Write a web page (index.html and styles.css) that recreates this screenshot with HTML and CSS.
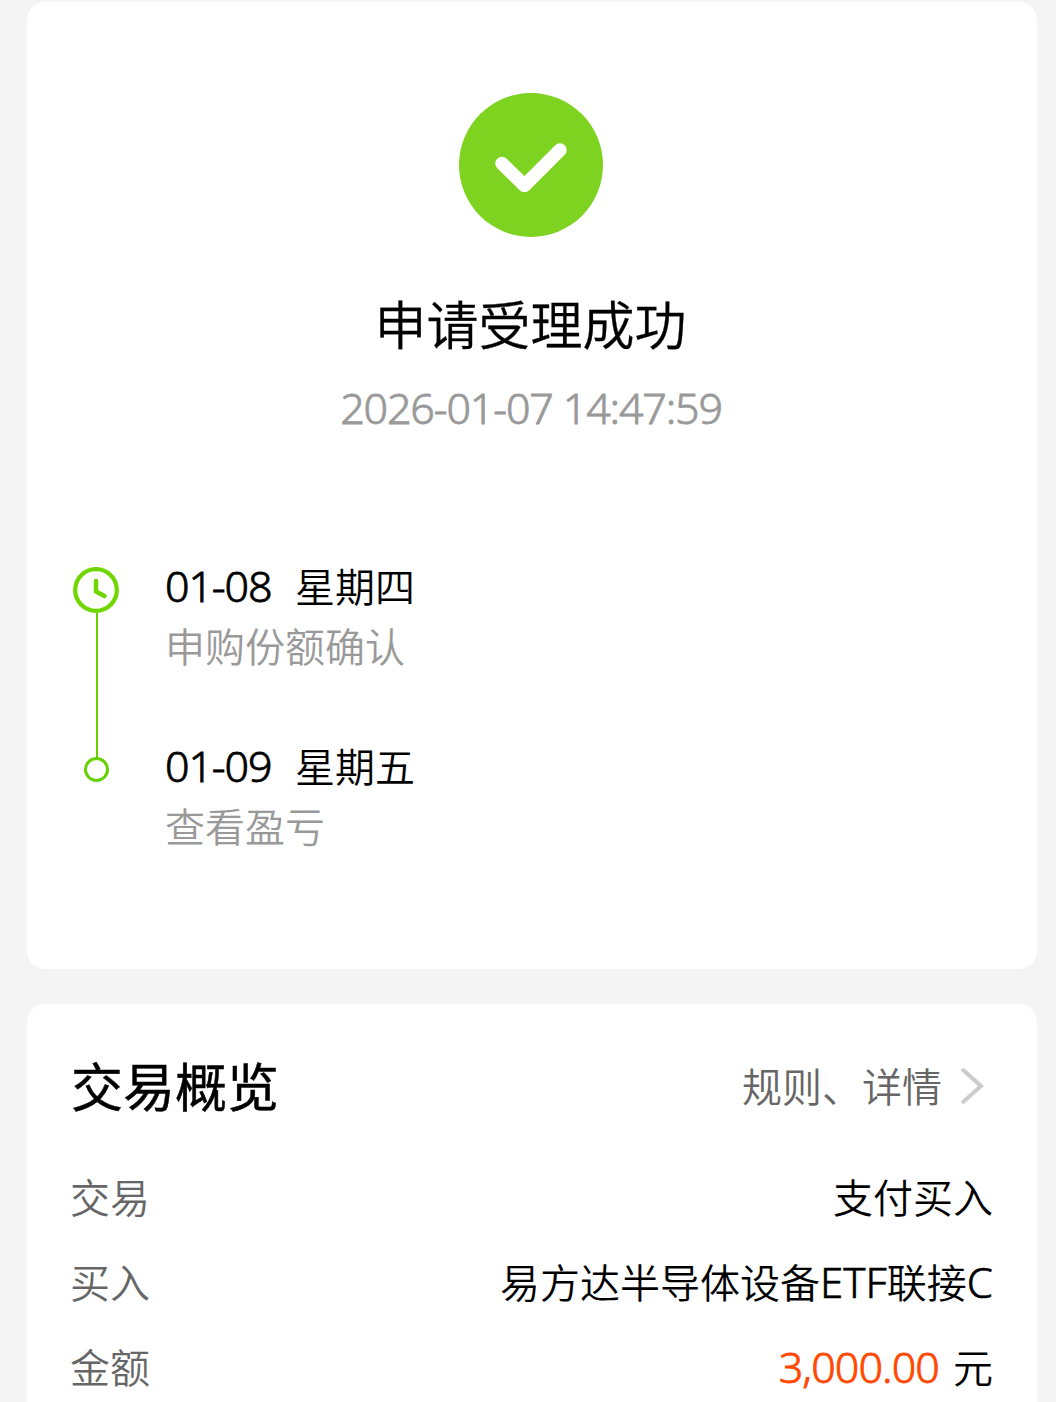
FILE: index.html
```html
<!DOCTYPE html>
<html lang="zh-CN">
<head>
  <meta charset="UTF-8">
  <meta name="viewport" content="width=device-width, initial-scale=1.0">
  <title>申请受理成功</title>
  <link rel="stylesheet" href="styles.css">
</head>
<body>
  <div class="card result-card">
    <svg class="success-icon" viewBox="0 0 144 144">
      <circle cx="72" cy="72" r="72" fill="#7ed321"/>
      <path d="M43 70.500L65.500 92.500L101 57" fill="none" stroke="#fff" stroke-width="13.500" stroke-linecap="round" stroke-linejoin="round"/>
    </svg>
    <h1 class="result-title">申请受理成功</h1>
    <div class="result-time num">2026-01-07 14:47:59</div>

    <div class="timeline">
      <div class="step">
        <div class="step-mark">
          <svg class="clock-icon" viewBox="0 0 46 46">
            <circle cx="23" cy="23" r="20.800" fill="none" stroke="#6fd600" stroke-width="4.200"/>
            <path d="M23 14V24.500L31.500 29" fill="none" stroke="#6fd600" stroke-width="4.500" stroke-linecap="round" stroke-linejoin="round"/>
          </svg>
          <div class="step-line"></div>
        </div>
        <div class="step-text">
          <div class="step-date"><span class="num">01-08</span><span>星期四</span></div>
          <div class="step-desc">申购份额确认</div>
        </div>
      </div>
      <div class="step">
        <div class="step-mark">
          <div class="step-dot"></div>
        </div>
        <div class="step-text">
          <div class="step-date"><span class="num">01-09</span><span>星期五</span></div>
          <div class="step-desc">查看盈亏</div>
        </div>
      </div>
    </div>
  </div>

  <div class="card overview-card">
    <div class="overview-header">
      <h2 class="overview-title">交易概览</h2>
      <a class="overview-link">
        <span>规则、详情</span>
        <svg class="arrow-icon" viewBox="0 0 24 38">
          <path d="M2 2L21 19L2 36" fill="none" stroke="#ccc" stroke-width="4"/>
        </svg>
      </a>
    </div>
    <div class="row">
      <span class="row-label">交易</span>
      <span class="row-value">支付买入</span>
    </div>
    <div class="row">
      <span class="row-label">买入</span>
      <span class="row-value">易方达半导体设备<span class="latin">ETF</span>联接<span class="latin">C</span></span>
    </div>
    <div class="row">
      <span class="row-label">金额</span>
      <span class="row-value"><span class="num amount">3,000.00</span>元</span>
    </div>
  </div>
</body>
</html>
```
FILE: styles.css
```css
* {
  box-sizing: border-box;
}
body {
  margin: 0;
  height: 1402px;
  overflow: hidden;
  padding: 2px 19px 0 27px;
  background: #f4f4f4;
  font-family: "Noto Sans CJK SC", sans-serif;
  font-weight: 350;
  font-size: 40px;
  line-height: 60px;
  color: #000;
}
.card {
  background: #fff;
  border-radius: 18px;
}
.num {
  font-family: "Noto Sans", sans-serif;
  font-weight: 300;
  font-size: 43px;
  letter-spacing: -1.15px;
  -webkit-text-stroke: 0.8px currentColor;
}
.latin {
  font-family: "Noto Sans", sans-serif;
  font-weight: 300;
  font-size: 42px;
  -webkit-text-stroke: 0.6px currentColor;
}

/* result */
.result-card {
  height: 967px;
  padding: 91px 45px 0;
  display: flex;
  flex-direction: column;
  align-items: center;
}
.success-icon {
  width: 144px;
  height: 144px;
  margin-right: 2px;
}
.result-title {
  margin: 47px 3px 0 0;
  font-size: 52px;
  font-weight: 350;
  line-height: 78px;
  -webkit-text-stroke: 0.3px currentColor;
}
.result-time {
  margin: 16px 2px 0 0;
  color: #999;
}

/* timeline */
.timeline {
  width: 100%;
  margin-top: 117px;
}
.step {
  display: flex;
  height: 180px;
}
.step-mark {
  width: 48px;
  margin-right: 45px;
  display: flex;
  flex-direction: column;
  align-items: center;
}
.clock-icon {
  width: 46px;
  height: 46px;
  margin: 12px 0 0;
  flex: none;
}
.step-line {
  width: 2px;
  height: 145px;
  margin-left: 2px;
  background: #66d000;
  flex: none;
}
.step-dot {
  width: 25px;
  height: 25px;
  margin: 22px 0 0 1px;
  border: 3px solid #66d000;
  border-radius: 50%;
}
.step-date {
  display: flex;
}
.step-date .num {
  width: 130px;
  padding-top: 1px;
}
.step-date,
.step-desc {
  height: 60px;
}
.step-desc {
  color: #999;
}

/* overview */
.overview-card {
  height: 420px;
  margin-top: 35px;
  padding: 41px 44px 0;
}
.overview-header {
  display: flex;
  justify-content: space-between;
  align-items: center;
  height: 80px;
  margin-bottom: 29px;
}
.overview-title {
  margin: 0;
  font-size: 52px;
  font-weight: 400;
  -webkit-text-stroke: 0.5px currentColor;
}
.overview-link {
  display: flex;
  align-items: center;
  gap: 18px;
  margin-right: 9px;
  color: #666;
}
.arrow-icon {
  width: 24px;
  height: 38px;
  margin-top: 2px;
}
.row {
  display: flex;
  justify-content: space-between;
  height: 85px;
  line-height: 85px;
}
.row-label {
  margin-left: -1px;
  color: #666;
}
.amount {
  margin-right: 14px;
  letter-spacing: -0.9px;
  color: #ff4800;
}
```
